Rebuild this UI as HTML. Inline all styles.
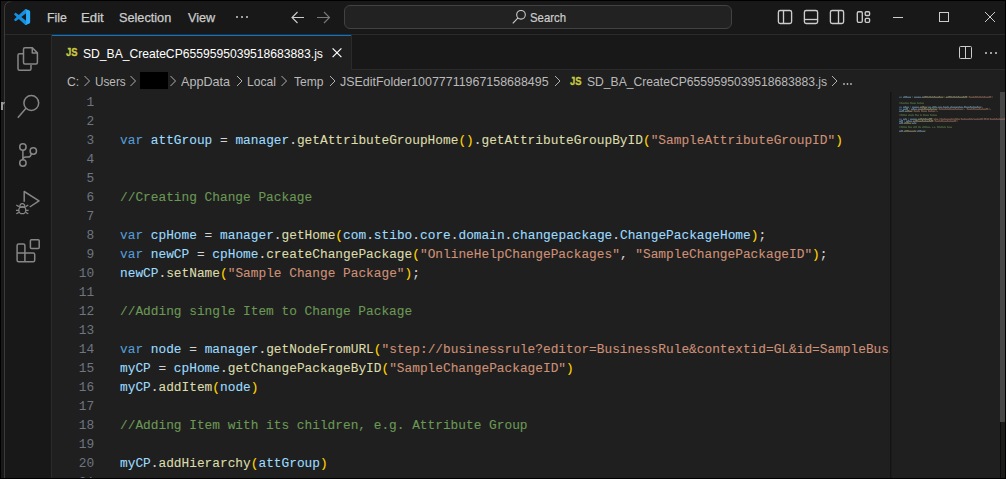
<!DOCTYPE html>
<html><head><meta charset="utf-8">
<style>
*{box-sizing:border-box;margin:0;padding:0}
html,body{width:1006px;height:479px;overflow:hidden;background:#000}
body{position:relative;font-family:"Liberation Sans",sans-serif}
.abs{position:absolute}
.t{position:absolute;white-space:nowrap;transform-origin:0 0}
#win{position:absolute;left:1px;top:1px;width:1004px;height:477px;background:#181818;overflow:hidden}
#frame{display:none}
.code{position:absolute;left:68px;font-family:"Liberation Mono",monospace;font-size:12.82px;white-space:pre;color:#d4d4d4;line-height:19px;-webkit-text-stroke:0.1px currentColor}
.ln{position:absolute;left:0;width:42.2px;text-align:right;font-family:"Liberation Mono",monospace;font-size:12.83px;color:#6e7681;line-height:19px}
.k{color:#569cd6}.v{color:#9cdcfe}.f{color:#dcdcaa}.s{color:#ce9178}.c{color:#6a9955}.b{color:#ffd700}
svg{overflow:visible}
</style></head><body>
<div class="abs" style="left:0;top:0;width:1006px;height:479px;background:#000"></div>
<div id="win">
  <div class="abs" style="left:0;top:0;width:1004px;height:33px;background:#181818"></div>
  <div class="abs" style="left:4px;top:33px;width:1000px;height:1px;background:#2b2b2b"></div>
  <div class="abs" style="left:343px;top:4px;width:388px;height:24px;background:#222222;border:1px solid #424242;border-radius:6px"></div>
  <div class="abs" style="left:50px;top:34px;width:1px;height:443px;background:#2b2b2b"></div>
  <div class="abs" style="left:51px;top:34px;width:953px;height:443px;background:#1f1f1f">
    <div class="abs" style="left:0;top:0;width:953px;height:35px;background:#181818;border-bottom:1px solid #2b2b2b"></div>
    <div class="abs" style="left:0;top:0;width:299px;height:35px;background:#1f1f1f;border-top:1px solid #0078d4"></div>
    <div class="abs" style="left:299px;top:0;width:1px;height:35px;background:#2b2b2b"></div>
    <div class="abs" style="left:0;top:57px;width:840px;height:386px;overflow:hidden">
<div class="ln" style="top:1.00px">1</div>
<div class="ln" style="top:20.00px">2</div>
<div class="ln" style="top:39.00px">3</div>
<div class="code" style="top:39.00px"><span class="k">var</span> <span class="v">attGroup</span> = <span class="v">manager</span>.<span class="f">getAttributeGroupHome</span><span class="b">()</span>.<span class="f">getAttributeGroupByID</span><span class="b">(</span><span class="s">"SampleAttributeGroupID"</span><span class="b">)</span></div>
<div class="ln" style="top:58.00px">4</div>
<div class="ln" style="top:77.00px">5</div>
<div class="ln" style="top:96.00px">6</div>
<div class="code" style="top:96.00px"><span class="c">//Creating Change Package</span></div>
<div class="ln" style="top:115.00px">7</div>
<div class="ln" style="top:134.00px">8</div>
<div class="code" style="top:134.00px"><span class="k">var</span> <span class="v">cpHome</span> = <span class="v">manager</span>.<span class="f">getHome</span><span class="b">(</span><span class="v">com</span>.<span class="v">stibo</span>.<span class="v">core</span>.<span class="v">domain</span>.<span class="v">changepackage</span>.<span class="v">ChangePackageHome</span><span class="b">)</span>;</div>
<div class="ln" style="top:153.00px">9</div>
<div class="code" style="top:153.00px"><span class="k">var</span> <span class="v">newCP</span> = <span class="v">cpHome</span>.<span class="f">createChangePackage</span><span class="b">(</span><span class="s">"OnlineHelpChangePackages"</span>, <span class="s">"SampleChangePackageID"</span><span class="b">)</span>;</div>
<div class="ln" style="top:172.00px">10</div>
<div class="code" style="top:172.00px"><span class="v">newCP</span>.<span class="f">setName</span><span class="b">(</span><span class="s">"Sample Change Package"</span><span class="b">)</span>;</div>
<div class="ln" style="top:191.00px">11</div>
<div class="ln" style="top:210.00px">12</div>
<div class="code" style="top:210.00px"><span class="c">//Adding single Item to Change Package</span></div>
<div class="ln" style="top:229.00px">13</div>
<div class="ln" style="top:248.00px">14</div>
<div class="code" style="top:248.00px"><span class="k">var</span> <span class="v">node</span> = <span class="v">manager</span>.<span class="f">getNodeFromURL</span><span class="b">(</span><span class="s">"step://businessrule?editor=BusinessRule&amp;contextid=GL&amp;id=SampleBusinessRule"</span><span class="b">)</span></div>
<div class="ln" style="top:267.00px">15</div>
<div class="code" style="top:267.00px"><span class="v">myCP</span> = <span class="v">cpHome</span>.<span class="f">getChangePackageByID</span><span class="b">(</span><span class="s">"SampleChangePackageID"</span><span class="b">)</span></div>
<div class="ln" style="top:286.00px">16</div>
<div class="code" style="top:286.00px"><span class="v">myCP</span>.<span class="f">addItem</span><span class="b">(</span><span class="v">node</span><span class="b">)</span></div>
<div class="ln" style="top:305.00px">17</div>
<div class="ln" style="top:324.00px">18</div>
<div class="code" style="top:324.00px"><span class="c">//Adding Item with its children, e.g. Attribute Group</span></div>
<div class="ln" style="top:343.00px">19</div>
<div class="ln" style="top:362.00px">20</div>
<div class="code" style="top:362.00px"><span class="v">myCP</span>.<span class="f">addHierarchy</span><span class="b">(</span><span class="v">attGroup</span><span class="b">)</span></div>
<div class="ln" style="top:381.00px">21</div>
    </div>
  </div>
  <div id="frame"></div>
</div>
<!-- page-coordinate overlays -->
<svg class="abs" style="left:0;top:0" width="1006" height="479">
  <!-- vscode logo -->
  <g transform="translate(14.1,9) scale(0.16)">
  <path d="M96.46 10.8 L75.86 .87 C73.48 -.28 70.63 .2 68.76 2.07 L29.35 38.04 12.18 25.01 C10.58 23.8 8.35 23.9 6.87 25.25 L1.37 30.25 C-.45 31.9 -.45 34.76 1.36 36.41 L16.25 50 1.36 63.59 C-.45 65.24 -.45 68.1 1.37 69.75 L6.87 74.75 C8.35 76.1 10.58 76.2 12.18 74.99 L29.35 61.96 68.76 97.93 C70.63 99.8 73.48 100.28 75.86 99.13 L96.46 89.2 C98.62 88.16 100 85.98 100 83.58 V16.42 C100 14.02 98.62 11.84 96.46 10.8 Z M75.02 72.7 L45.11 50 75.02 27.3 V72.7 Z" fill="#168ee0"/>
  <path d="M75.02 2 L96.46 10.8 C98.62 11.84 100 14.02 100 16.42 V83.58 C100 85.98 98.62 88.16 96.46 89.2 L75.86 99.13 C73.5 100.2 71 99.9 69 98 L75.02 92 Z" fill="#2aa9f5"/>
  </g>
  <!-- nav arrows -->
  <path d="M304 17.5 H291.5 M297.5 12 L292 17.5 L297.5 23" stroke="#cccccc" stroke-width="1.1" fill="none"/>
  <path d="M317 17.5 H329.5 M324 12 L329.5 17.5 L324 23" stroke="#7a7a7a" stroke-width="1.1" fill="none"/>
  <!-- search magnifier -->
  <circle cx="521" cy="14.8" r="4.3" stroke="#cccccc" stroke-width="1.1" fill="none"/>
  <path d="M518 17.9 L512.8 23.4" stroke="#cccccc" stroke-width="1.1"/>
  <!-- layout icons -->
  <g stroke="#cccccc" stroke-width="1.35" fill="none">
    <rect x="778.4" y="10.5" width="13.2" height="13" rx="1.8"/><path d="M783.5 11 V23"/>
    <rect x="804.4" y="10.5" width="13.2" height="13" rx="1.8"/><path d="M805 19.5 H817"/>
    <rect x="830.4" y="10.5" width="13.2" height="13" rx="1.8"/><path d="M838.5 11 V23"/>
    <rect x="857.3" y="11.7" width="5" height="10.6" rx="1.2"/>
    <rect x="865.2" y="11.7" width="4.4" height="3.8" rx="1.1"/>
    <rect x="865.2" y="18.4" width="4.4" height="3.9" rx="1.1"/>
  </g>
  <!-- window controls -->
  <path d="M893 17.5 H903" stroke="#cccccc" stroke-width="1"/>
  <rect x="939.5" y="12.5" width="9" height="9" stroke="#cccccc" stroke-width="1" fill="none"/>
  <path d="M985 12 L995 22 M995 12 L985 22" stroke="#cccccc" stroke-width="1"/>
  <!-- menu dots -->
  <circle cx="237" cy="17" r="1" fill="#cccccc"/><circle cx="242" cy="17" r="1" fill="#cccccc"/><circle cx="247" cy="17" r="1" fill="#cccccc"/>
  <!-- tab close -->
  <path d="M332.6 48.4 L341.4 57.2 M341.4 48.4 L332.6 57.2" stroke="#ffffff" stroke-width="1.2"/>
  <!-- split editor + more -->
  <g stroke="#cccccc" stroke-width="1" fill="none"><rect x="959.5" y="46.5" width="12" height="12" rx="1"/><path d="M965.5 47 V58"/></g>
  <circle cx="986" cy="53" r="1" fill="#cccccc"/><circle cx="991" cy="53" r="1" fill="#cccccc"/><circle cx="996" cy="53" r="1" fill="#cccccc"/>
  <!-- breadcrumb chevrons -->
  <g stroke="#b0b0b0" stroke-width="1" fill="none">
    <path d="M84.5 76 L89.5 81 L84.5 86"/>
    <path d="M130.5 76 L135.5 81 L130.5 86"/>
    <path d="M170.5 76 L175.5 81 L170.5 86"/>
    <path d="M237 76 L242 81 L237 86"/>
    <path d="M281.5 76 L286.5 81 L281.5 86"/>
    <path d="M330 76 L335 81 L330 86"/>
    <path d="M555 76 L560 81 L555 86"/>
    <path d="M832 76 L837 81 L832 86"/>
  </g>
  <rect x="140" y="72" width="28" height="17" fill="#000"/>
  <circle cx="844" cy="84" r="0.9" fill="#bababa"/><circle cx="847.5" cy="84" r="0.9" fill="#bababa"/><circle cx="851" cy="84" r="0.9" fill="#bababa"/>
  <!-- activity bar icons -->
  <g stroke="#868686" stroke-width="1.5" fill="none" stroke-linejoin="round">
    <path d="M23 53.8 H19.5 Q18 53.8 18 55.3 V68.8 Q18 70.3 19.5 70.3 H29.5 Q31 70.3 31 68.8 V65"/>
    <path d="M25 47.8 H32.3 L37.4 52.9 V62.5 Q37.4 64 35.9 64 H25 Q23.5 64 23.5 62.5 V49.3 Q23.5 47.8 25 47.8 Z"/>
    <path d="M32.3 47.8 V52.9 H37.4"/>
    <circle cx="31.3" cy="103" r="7.4"/>
    <path d="M26 108.3 L17.8 117.8"/>
    <circle cx="22.9" cy="147" r="3.2"/><circle cx="33.3" cy="151" r="3.2"/><circle cx="22.9" cy="163" r="3.2"/>
    <path d="M22.9 150.2 V159.8"/>
    <path d="M31.4 154 Q30.6 157.1 28 157.1 H25.8 Q22.9 157.1 22.9 159.8"/>
    <path d="M24.2 201.8 V191.5 L39 200.8 L29.7 207"/>
    <path d="M18.6 244 H23.4 Q24.9 244 24.9 245.5 V253 H33.2 Q34.7 253 34.7 254.5 V260.3 Q34.7 261.8 33.2 261.8 H18.6 Q17.1 261.8 17.1 260.3 V245.5 Q17.1 244 18.6 244 Z M17.1 253 H24.9 V261.8"/>
    <rect x="30.4" y="239.8" width="8.8" height="8.8" rx="1"/>
  </g>
  <g stroke="#868686" stroke-width="1.3" fill="none">
    <path d="M19.8 207.2 Q19.8 203.7 22.3 203.7 Q24.8 203.7 24.8 207.2"/>
    <ellipse cx="22.3" cy="210.2" rx="3.5" ry="3.5"/>
    <path d="M19 207.2 H25.6"/>
    <path d="M16.3 205 L18.9 206.6 M28.3 205 L25.7 206.6 M16 210.3 H18.8 M28.6 210.3 H25.8 M16.3 213.8 L18.9 212.4 M28.3 213.8 L25.7 212.4"/>
  </g>
  <!-- minimap shadow + scrollbar -->
  <rect x="890" y="92" width="1" height="386" fill="#131313"/><rect x="891" y="92" width="1" height="386" fill="#1a1a1a"/>
  <rect x="1000" y="92" width="5" height="330" fill="#464646"/>
  <rect x="1001" y="422" width="4" height="56" fill="#1c1b1a"/><rect x="1000" y="422" width="1" height="56" fill="#0a0b0e"/>
  <defs><linearGradient id="fg" x1="4" y1="0" x2="12" y2="0" gradientUnits="userSpaceOnUse"><stop offset="0" stop-color="#3a3a3a"/><stop offset="0.6" stop-color="#3a3a3a"/><stop offset="1" stop-color="#3a3a3a" stop-opacity="0"/></linearGradient></defs>
  <path d="M4.5 478 V8 Q4.5 1.5 12 1.5" stroke="url(#fg)" stroke-width="1" fill="none"/>
  <rect x="4" y="12" width="1" height="466" fill="#3a3a3a"/>
  <!-- left "r" -->
  <rect x="1" y="102" width="2" height="8" fill="#9a9a9a"/><path d="M2.6 104.5 Q3 102.6 5 102.6" stroke="#9a9a9a" stroke-width="1.4" fill="none"/>
</svg>
<svg class="abs" style="left:899px;top:92px" width="100" height="60"><rect x="0" y="4" width="3" height="1" fill="#569cd6" fill-opacity="0.17"/><rect x="4" y="4" width="1" height="1" fill="#9cdcfe" fill-opacity="0.17"/><rect x="5" y="4" width="2" height="1" fill="#9cdcfe" fill-opacity="0.33"/><rect x="7" y="4" width="1" height="1" fill="#9cdcfe" fill-opacity="0.41"/><rect x="8" y="4" width="3" height="1" fill="#9cdcfe" fill-opacity="0.17"/><rect x="11" y="4" width="1" height="1" fill="#9cdcfe" fill-opacity="0.19"/><rect x="13" y="4" width="1" height="1" fill="#d4d4d4" fill-opacity="0.14"/><rect x="15" y="4" width="4" height="1" fill="#9cdcfe" fill-opacity="0.17"/><rect x="19" y="4" width="1" height="1" fill="#9cdcfe" fill-opacity="0.19"/><rect x="20" y="4" width="2" height="1" fill="#9cdcfe" fill-opacity="0.17"/><rect x="23" y="4" width="1" height="1" fill="#dcdcaa" fill-opacity="0.19"/><rect x="24" y="4" width="1" height="1" fill="#dcdcaa" fill-opacity="0.17"/><rect x="25" y="4" width="1" height="1" fill="#dcdcaa" fill-opacity="0.33"/><rect x="26" y="4" width="1" height="1" fill="#dcdcaa" fill-opacity="0.41"/><rect x="27" y="4" width="2" height="1" fill="#dcdcaa" fill-opacity="0.33"/><rect x="29" y="4" width="1" height="1" fill="#dcdcaa" fill-opacity="0.17"/><rect x="30" y="4" width="2" height="1" fill="#dcdcaa" fill-opacity="0.33"/><rect x="32" y="4" width="1" height="1" fill="#dcdcaa" fill-opacity="0.17"/><rect x="33" y="4" width="1" height="1" fill="#dcdcaa" fill-opacity="0.33"/><rect x="34" y="4" width="1" height="1" fill="#dcdcaa" fill-opacity="0.17"/><rect x="35" y="4" width="1" height="1" fill="#dcdcaa" fill-opacity="0.41"/><rect x="36" y="4" width="3" height="1" fill="#dcdcaa" fill-opacity="0.17"/><rect x="39" y="4" width="1" height="1" fill="#dcdcaa" fill-opacity="0.19"/><rect x="40" y="4" width="1" height="1" fill="#dcdcaa" fill-opacity="0.41"/><rect x="41" y="4" width="3" height="1" fill="#dcdcaa" fill-opacity="0.17"/><rect x="44" y="4" width="2" height="1" fill="#ffd700" fill-opacity="0.14"/><rect x="47" y="4" width="1" height="1" fill="#dcdcaa" fill-opacity="0.19"/><rect x="48" y="4" width="1" height="1" fill="#dcdcaa" fill-opacity="0.17"/><rect x="49" y="4" width="1" height="1" fill="#dcdcaa" fill-opacity="0.33"/><rect x="50" y="4" width="1" height="1" fill="#dcdcaa" fill-opacity="0.41"/><rect x="51" y="4" width="2" height="1" fill="#dcdcaa" fill-opacity="0.33"/><rect x="53" y="4" width="1" height="1" fill="#dcdcaa" fill-opacity="0.17"/><rect x="54" y="4" width="2" height="1" fill="#dcdcaa" fill-opacity="0.33"/><rect x="56" y="4" width="1" height="1" fill="#dcdcaa" fill-opacity="0.17"/><rect x="57" y="4" width="1" height="1" fill="#dcdcaa" fill-opacity="0.33"/><rect x="58" y="4" width="1" height="1" fill="#dcdcaa" fill-opacity="0.17"/><rect x="59" y="4" width="1" height="1" fill="#dcdcaa" fill-opacity="0.41"/><rect x="60" y="4" width="3" height="1" fill="#dcdcaa" fill-opacity="0.17"/><rect x="63" y="4" width="1" height="1" fill="#dcdcaa" fill-opacity="0.19"/><rect x="64" y="4" width="1" height="1" fill="#dcdcaa" fill-opacity="0.41"/><rect x="65" y="4" width="1" height="1" fill="#dcdcaa" fill-opacity="0.19"/><rect x="66" y="4" width="2" height="1" fill="#dcdcaa" fill-opacity="0.41"/><rect x="68" y="4" width="1" height="1" fill="#ffd700" fill-opacity="0.14"/><rect x="69" y="4" width="1" height="1" fill="#ce9178" fill-opacity="0.14"/><rect x="70" y="4" width="1" height="1" fill="#ce9178" fill-opacity="0.41"/><rect x="71" y="4" width="2" height="1" fill="#ce9178" fill-opacity="0.17"/><rect x="73" y="4" width="1" height="1" fill="#ce9178" fill-opacity="0.19"/><rect x="74" y="4" width="1" height="1" fill="#ce9178" fill-opacity="0.33"/><rect x="75" y="4" width="1" height="1" fill="#ce9178" fill-opacity="0.17"/><rect x="76" y="4" width="1" height="1" fill="#ce9178" fill-opacity="0.41"/><rect x="77" y="4" width="2" height="1" fill="#ce9178" fill-opacity="0.33"/><rect x="79" y="4" width="1" height="1" fill="#ce9178" fill-opacity="0.17"/><rect x="80" y="4" width="2" height="1" fill="#ce9178" fill-opacity="0.33"/><rect x="82" y="4" width="1" height="1" fill="#ce9178" fill-opacity="0.17"/><rect x="83" y="4" width="1" height="1" fill="#ce9178" fill-opacity="0.33"/><rect x="84" y="4" width="1" height="1" fill="#ce9178" fill-opacity="0.17"/><rect x="85" y="4" width="1" height="1" fill="#ce9178" fill-opacity="0.41"/><rect x="86" y="4" width="3" height="1" fill="#ce9178" fill-opacity="0.17"/><rect x="89" y="4" width="1" height="1" fill="#ce9178" fill-opacity="0.19"/><rect x="90" y="4" width="2" height="1" fill="#ce9178" fill-opacity="0.41"/><rect x="92" y="4" width="1" height="1" fill="#ce9178" fill-opacity="0.14"/><rect x="93" y="4" width="1" height="1" fill="#ffd700" fill-opacity="0.14"/><rect x="0" y="5" width="3" height="1" fill="#569cd6" fill-opacity="0.39"/><rect x="4" y="5" width="1" height="1" fill="#9cdcfe" fill-opacity="0.39"/><rect x="5" y="5" width="3" height="1" fill="#9cdcfe" fill-opacity="0.36"/><rect x="8" y="5" width="3" height="1" fill="#9cdcfe" fill-opacity="0.39"/><rect x="11" y="5" width="1" height="1" fill="#9cdcfe" fill-opacity="0.41"/><rect x="13" y="5" width="1" height="1" fill="#d4d4d4" fill-opacity="0.14"/><rect x="15" y="5" width="4" height="1" fill="#9cdcfe" fill-opacity="0.39"/><rect x="19" y="5" width="1" height="1" fill="#9cdcfe" fill-opacity="0.41"/><rect x="20" y="5" width="2" height="1" fill="#9cdcfe" fill-opacity="0.39"/><rect x="22" y="5" width="1" height="1" fill="#d4d4d4" fill-opacity="0.19"/><rect x="23" y="5" width="1" height="1" fill="#dcdcaa" fill-opacity="0.41"/><rect x="24" y="5" width="1" height="1" fill="#dcdcaa" fill-opacity="0.39"/><rect x="25" y="5" width="4" height="1" fill="#dcdcaa" fill-opacity="0.36"/><rect x="29" y="5" width="1" height="1" fill="#dcdcaa" fill-opacity="0.39"/><rect x="30" y="5" width="2" height="1" fill="#dcdcaa" fill-opacity="0.36"/><rect x="32" y="5" width="1" height="1" fill="#dcdcaa" fill-opacity="0.39"/><rect x="33" y="5" width="1" height="1" fill="#dcdcaa" fill-opacity="0.36"/><rect x="34" y="5" width="1" height="1" fill="#dcdcaa" fill-opacity="0.39"/><rect x="35" y="5" width="1" height="1" fill="#dcdcaa" fill-opacity="0.36"/><rect x="36" y="5" width="3" height="1" fill="#dcdcaa" fill-opacity="0.39"/><rect x="39" y="5" width="1" height="1" fill="#dcdcaa" fill-opacity="0.41"/><rect x="40" y="5" width="1" height="1" fill="#dcdcaa" fill-opacity="0.36"/><rect x="41" y="5" width="3" height="1" fill="#dcdcaa" fill-opacity="0.39"/><rect x="44" y="5" width="2" height="1" fill="#ffd700" fill-opacity="0.14"/><rect x="46" y="5" width="1" height="1" fill="#d4d4d4" fill-opacity="0.19"/><rect x="47" y="5" width="1" height="1" fill="#dcdcaa" fill-opacity="0.41"/><rect x="48" y="5" width="1" height="1" fill="#dcdcaa" fill-opacity="0.39"/><rect x="49" y="5" width="4" height="1" fill="#dcdcaa" fill-opacity="0.36"/><rect x="53" y="5" width="1" height="1" fill="#dcdcaa" fill-opacity="0.39"/><rect x="54" y="5" width="2" height="1" fill="#dcdcaa" fill-opacity="0.36"/><rect x="56" y="5" width="1" height="1" fill="#dcdcaa" fill-opacity="0.39"/><rect x="57" y="5" width="1" height="1" fill="#dcdcaa" fill-opacity="0.36"/><rect x="58" y="5" width="1" height="1" fill="#dcdcaa" fill-opacity="0.39"/><rect x="59" y="5" width="1" height="1" fill="#dcdcaa" fill-opacity="0.36"/><rect x="60" y="5" width="3" height="1" fill="#dcdcaa" fill-opacity="0.39"/><rect x="63" y="5" width="1" height="1" fill="#dcdcaa" fill-opacity="0.41"/><rect x="64" y="5" width="1" height="1" fill="#dcdcaa" fill-opacity="0.36"/><rect x="65" y="5" width="1" height="1" fill="#dcdcaa" fill-opacity="0.41"/><rect x="66" y="5" width="2" height="1" fill="#dcdcaa" fill-opacity="0.36"/><rect x="68" y="5" width="1" height="1" fill="#ffd700" fill-opacity="0.14"/><rect x="69" y="5" width="1" height="1" fill="#ce9178" fill-opacity="0.14"/><rect x="70" y="5" width="1" height="1" fill="#ce9178" fill-opacity="0.36"/><rect x="71" y="5" width="2" height="1" fill="#ce9178" fill-opacity="0.39"/><rect x="73" y="5" width="1" height="1" fill="#ce9178" fill-opacity="0.41"/><rect x="74" y="5" width="1" height="1" fill="#ce9178" fill-opacity="0.36"/><rect x="75" y="5" width="1" height="1" fill="#ce9178" fill-opacity="0.39"/><rect x="76" y="5" width="3" height="1" fill="#ce9178" fill-opacity="0.36"/><rect x="79" y="5" width="1" height="1" fill="#ce9178" fill-opacity="0.39"/><rect x="80" y="5" width="2" height="1" fill="#ce9178" fill-opacity="0.36"/><rect x="82" y="5" width="1" height="1" fill="#ce9178" fill-opacity="0.39"/><rect x="83" y="5" width="1" height="1" fill="#ce9178" fill-opacity="0.36"/><rect x="84" y="5" width="1" height="1" fill="#ce9178" fill-opacity="0.39"/><rect x="85" y="5" width="1" height="1" fill="#ce9178" fill-opacity="0.36"/><rect x="86" y="5" width="3" height="1" fill="#ce9178" fill-opacity="0.39"/><rect x="89" y="5" width="1" height="1" fill="#ce9178" fill-opacity="0.41"/><rect x="90" y="5" width="2" height="1" fill="#ce9178" fill-opacity="0.36"/><rect x="92" y="5" width="1" height="1" fill="#ce9178" fill-opacity="0.14"/><rect x="93" y="5" width="1" height="1" fill="#ffd700" fill-opacity="0.14"/><rect x="0" y="10" width="2" height="1" fill="#6a9955" fill-opacity="0.25"/><rect x="2" y="10" width="1" height="1" fill="#6a9955" fill-opacity="0.41"/><rect x="3" y="10" width="3" height="1" fill="#6a9955" fill-opacity="0.17"/><rect x="6" y="10" width="2" height="1" fill="#6a9955" fill-opacity="0.33"/><rect x="8" y="10" width="1" height="1" fill="#6a9955" fill-opacity="0.17"/><rect x="9" y="10" width="1" height="1" fill="#6a9955" fill-opacity="0.19"/><rect x="11" y="10" width="1" height="1" fill="#6a9955" fill-opacity="0.41"/><rect x="12" y="10" width="1" height="1" fill="#6a9955" fill-opacity="0.33"/><rect x="13" y="10" width="2" height="1" fill="#6a9955" fill-opacity="0.17"/><rect x="15" y="10" width="1" height="1" fill="#6a9955" fill-opacity="0.19"/><rect x="16" y="10" width="1" height="1" fill="#6a9955" fill-opacity="0.17"/><rect x="18" y="10" width="1" height="1" fill="#6a9955" fill-opacity="0.41"/><rect x="19" y="10" width="2" height="1" fill="#6a9955" fill-opacity="0.17"/><rect x="21" y="10" width="1" height="1" fill="#6a9955" fill-opacity="0.33"/><rect x="22" y="10" width="1" height="1" fill="#6a9955" fill-opacity="0.17"/><rect x="23" y="10" width="1" height="1" fill="#6a9955" fill-opacity="0.19"/><rect x="24" y="10" width="1" height="1" fill="#6a9955" fill-opacity="0.17"/><rect x="0" y="11" width="2" height="1" fill="#6a9955" fill-opacity="0.22"/><rect x="2" y="11" width="1" height="1" fill="#6a9955" fill-opacity="0.36"/><rect x="3" y="11" width="3" height="1" fill="#6a9955" fill-opacity="0.39"/><rect x="6" y="11" width="2" height="1" fill="#6a9955" fill-opacity="0.36"/><rect x="8" y="11" width="1" height="1" fill="#6a9955" fill-opacity="0.39"/><rect x="9" y="11" width="1" height="1" fill="#6a9955" fill-opacity="0.41"/><rect x="11" y="11" width="2" height="1" fill="#6a9955" fill-opacity="0.36"/><rect x="13" y="11" width="2" height="1" fill="#6a9955" fill-opacity="0.39"/><rect x="15" y="11" width="1" height="1" fill="#6a9955" fill-opacity="0.41"/><rect x="16" y="11" width="1" height="1" fill="#6a9955" fill-opacity="0.39"/><rect x="18" y="11" width="1" height="1" fill="#6a9955" fill-opacity="0.36"/><rect x="19" y="11" width="2" height="1" fill="#6a9955" fill-opacity="0.39"/><rect x="21" y="11" width="1" height="1" fill="#6a9955" fill-opacity="0.36"/><rect x="22" y="11" width="1" height="1" fill="#6a9955" fill-opacity="0.39"/><rect x="23" y="11" width="1" height="1" fill="#6a9955" fill-opacity="0.41"/><rect x="24" y="11" width="1" height="1" fill="#6a9955" fill-opacity="0.39"/><rect x="0" y="14" width="3" height="1" fill="#569cd6" fill-opacity="0.17"/><rect x="4" y="14" width="1" height="1" fill="#9cdcfe" fill-opacity="0.17"/><rect x="5" y="14" width="1" height="1" fill="#9cdcfe" fill-opacity="0.19"/><rect x="6" y="14" width="1" height="1" fill="#9cdcfe" fill-opacity="0.41"/><rect x="7" y="14" width="3" height="1" fill="#9cdcfe" fill-opacity="0.17"/><rect x="11" y="14" width="1" height="1" fill="#d4d4d4" fill-opacity="0.14"/><rect x="13" y="14" width="4" height="1" fill="#9cdcfe" fill-opacity="0.17"/><rect x="17" y="14" width="1" height="1" fill="#9cdcfe" fill-opacity="0.19"/><rect x="18" y="14" width="2" height="1" fill="#9cdcfe" fill-opacity="0.17"/><rect x="21" y="14" width="1" height="1" fill="#dcdcaa" fill-opacity="0.19"/><rect x="22" y="14" width="1" height="1" fill="#dcdcaa" fill-opacity="0.17"/><rect x="23" y="14" width="1" height="1" fill="#dcdcaa" fill-opacity="0.33"/><rect x="24" y="14" width="1" height="1" fill="#dcdcaa" fill-opacity="0.41"/><rect x="25" y="14" width="3" height="1" fill="#dcdcaa" fill-opacity="0.17"/><rect x="28" y="14" width="1" height="1" fill="#ffd700" fill-opacity="0.14"/><rect x="29" y="14" width="3" height="1" fill="#9cdcfe" fill-opacity="0.17"/><rect x="33" y="14" width="1" height="1" fill="#9cdcfe" fill-opacity="0.17"/><rect x="34" y="14" width="3" height="1" fill="#9cdcfe" fill-opacity="0.33"/><rect x="37" y="14" width="1" height="1" fill="#9cdcfe" fill-opacity="0.17"/><rect x="39" y="14" width="4" height="1" fill="#9cdcfe" fill-opacity="0.17"/><rect x="44" y="14" width="1" height="1" fill="#9cdcfe" fill-opacity="0.33"/><rect x="45" y="14" width="3" height="1" fill="#9cdcfe" fill-opacity="0.17"/><rect x="48" y="14" width="1" height="1" fill="#9cdcfe" fill-opacity="0.33"/><rect x="49" y="14" width="1" height="1" fill="#9cdcfe" fill-opacity="0.17"/><rect x="51" y="14" width="1" height="1" fill="#9cdcfe" fill-opacity="0.17"/><rect x="52" y="14" width="1" height="1" fill="#9cdcfe" fill-opacity="0.33"/><rect x="53" y="14" width="2" height="1" fill="#9cdcfe" fill-opacity="0.17"/><rect x="55" y="14" width="1" height="1" fill="#9cdcfe" fill-opacity="0.19"/><rect x="56" y="14" width="1" height="1" fill="#9cdcfe" fill-opacity="0.17"/><rect x="57" y="14" width="1" height="1" fill="#9cdcfe" fill-opacity="0.19"/><rect x="58" y="14" width="2" height="1" fill="#9cdcfe" fill-opacity="0.17"/><rect x="60" y="14" width="1" height="1" fill="#9cdcfe" fill-opacity="0.33"/><rect x="61" y="14" width="1" height="1" fill="#9cdcfe" fill-opacity="0.17"/><rect x="62" y="14" width="1" height="1" fill="#9cdcfe" fill-opacity="0.19"/><rect x="63" y="14" width="1" height="1" fill="#9cdcfe" fill-opacity="0.17"/><rect x="65" y="14" width="1" height="1" fill="#9cdcfe" fill-opacity="0.41"/><rect x="66" y="14" width="1" height="1" fill="#9cdcfe" fill-opacity="0.33"/><rect x="67" y="14" width="2" height="1" fill="#9cdcfe" fill-opacity="0.17"/><rect x="69" y="14" width="1" height="1" fill="#9cdcfe" fill-opacity="0.19"/><rect x="70" y="14" width="1" height="1" fill="#9cdcfe" fill-opacity="0.17"/><rect x="71" y="14" width="1" height="1" fill="#9cdcfe" fill-opacity="0.41"/><rect x="72" y="14" width="2" height="1" fill="#9cdcfe" fill-opacity="0.17"/><rect x="74" y="14" width="1" height="1" fill="#9cdcfe" fill-opacity="0.33"/><rect x="75" y="14" width="1" height="1" fill="#9cdcfe" fill-opacity="0.17"/><rect x="76" y="14" width="1" height="1" fill="#9cdcfe" fill-opacity="0.19"/><rect x="77" y="14" width="1" height="1" fill="#9cdcfe" fill-opacity="0.17"/><rect x="78" y="14" width="1" height="1" fill="#9cdcfe" fill-opacity="0.41"/><rect x="79" y="14" width="3" height="1" fill="#9cdcfe" fill-opacity="0.17"/><rect x="82" y="14" width="1" height="1" fill="#ffd700" fill-opacity="0.14"/><rect x="0" y="15" width="3" height="1" fill="#569cd6" fill-opacity="0.39"/><rect x="4" y="15" width="1" height="1" fill="#9cdcfe" fill-opacity="0.39"/><rect x="5" y="15" width="1" height="1" fill="#9cdcfe" fill-opacity="0.41"/><rect x="6" y="15" width="1" height="1" fill="#9cdcfe" fill-opacity="0.36"/><rect x="7" y="15" width="3" height="1" fill="#9cdcfe" fill-opacity="0.39"/><rect x="11" y="15" width="1" height="1" fill="#d4d4d4" fill-opacity="0.14"/><rect x="13" y="15" width="4" height="1" fill="#9cdcfe" fill-opacity="0.39"/><rect x="17" y="15" width="1" height="1" fill="#9cdcfe" fill-opacity="0.41"/><rect x="18" y="15" width="2" height="1" fill="#9cdcfe" fill-opacity="0.39"/><rect x="20" y="15" width="1" height="1" fill="#d4d4d4" fill-opacity="0.19"/><rect x="21" y="15" width="1" height="1" fill="#dcdcaa" fill-opacity="0.41"/><rect x="22" y="15" width="1" height="1" fill="#dcdcaa" fill-opacity="0.39"/><rect x="23" y="15" width="2" height="1" fill="#dcdcaa" fill-opacity="0.36"/><rect x="25" y="15" width="3" height="1" fill="#dcdcaa" fill-opacity="0.39"/><rect x="28" y="15" width="1" height="1" fill="#ffd700" fill-opacity="0.14"/><rect x="29" y="15" width="3" height="1" fill="#9cdcfe" fill-opacity="0.39"/><rect x="32" y="15" width="1" height="1" fill="#d4d4d4" fill-opacity="0.19"/><rect x="33" y="15" width="1" height="1" fill="#9cdcfe" fill-opacity="0.39"/><rect x="34" y="15" width="3" height="1" fill="#9cdcfe" fill-opacity="0.36"/><rect x="37" y="15" width="1" height="1" fill="#9cdcfe" fill-opacity="0.39"/><rect x="38" y="15" width="1" height="1" fill="#d4d4d4" fill-opacity="0.19"/><rect x="39" y="15" width="4" height="1" fill="#9cdcfe" fill-opacity="0.39"/><rect x="43" y="15" width="1" height="1" fill="#d4d4d4" fill-opacity="0.19"/><rect x="44" y="15" width="1" height="1" fill="#9cdcfe" fill-opacity="0.36"/><rect x="45" y="15" width="3" height="1" fill="#9cdcfe" fill-opacity="0.39"/><rect x="48" y="15" width="1" height="1" fill="#9cdcfe" fill-opacity="0.36"/><rect x="49" y="15" width="1" height="1" fill="#9cdcfe" fill-opacity="0.39"/><rect x="50" y="15" width="1" height="1" fill="#d4d4d4" fill-opacity="0.19"/><rect x="51" y="15" width="1" height="1" fill="#9cdcfe" fill-opacity="0.39"/><rect x="52" y="15" width="1" height="1" fill="#9cdcfe" fill-opacity="0.36"/><rect x="53" y="15" width="2" height="1" fill="#9cdcfe" fill-opacity="0.39"/><rect x="55" y="15" width="1" height="1" fill="#9cdcfe" fill-opacity="0.41"/><rect x="56" y="15" width="1" height="1" fill="#9cdcfe" fill-opacity="0.39"/><rect x="57" y="15" width="1" height="1" fill="#9cdcfe" fill-opacity="0.41"/><rect x="58" y="15" width="2" height="1" fill="#9cdcfe" fill-opacity="0.39"/><rect x="60" y="15" width="1" height="1" fill="#9cdcfe" fill-opacity="0.36"/><rect x="61" y="15" width="1" height="1" fill="#9cdcfe" fill-opacity="0.39"/><rect x="62" y="15" width="1" height="1" fill="#9cdcfe" fill-opacity="0.41"/><rect x="63" y="15" width="1" height="1" fill="#9cdcfe" fill-opacity="0.39"/><rect x="64" y="15" width="1" height="1" fill="#d4d4d4" fill-opacity="0.19"/><rect x="65" y="15" width="2" height="1" fill="#9cdcfe" fill-opacity="0.36"/><rect x="67" y="15" width="2" height="1" fill="#9cdcfe" fill-opacity="0.39"/><rect x="69" y="15" width="1" height="1" fill="#9cdcfe" fill-opacity="0.41"/><rect x="70" y="15" width="1" height="1" fill="#9cdcfe" fill-opacity="0.39"/><rect x="71" y="15" width="1" height="1" fill="#9cdcfe" fill-opacity="0.36"/><rect x="72" y="15" width="2" height="1" fill="#9cdcfe" fill-opacity="0.39"/><rect x="74" y="15" width="1" height="1" fill="#9cdcfe" fill-opacity="0.36"/><rect x="75" y="15" width="1" height="1" fill="#9cdcfe" fill-opacity="0.39"/><rect x="76" y="15" width="1" height="1" fill="#9cdcfe" fill-opacity="0.41"/><rect x="77" y="15" width="1" height="1" fill="#9cdcfe" fill-opacity="0.39"/><rect x="78" y="15" width="1" height="1" fill="#9cdcfe" fill-opacity="0.36"/><rect x="79" y="15" width="3" height="1" fill="#9cdcfe" fill-opacity="0.39"/><rect x="82" y="15" width="1" height="1" fill="#ffd700" fill-opacity="0.14"/><rect x="83" y="15" width="1" height="1" fill="#d4d4d4" fill-opacity="0.19"/><rect x="0" y="16" width="3" height="1" fill="#569cd6" fill-opacity="0.17"/><rect x="4" y="16" width="3" height="1" fill="#9cdcfe" fill-opacity="0.17"/><rect x="7" y="16" width="2" height="1" fill="#9cdcfe" fill-opacity="0.41"/><rect x="10" y="16" width="1" height="1" fill="#d4d4d4" fill-opacity="0.14"/><rect x="12" y="16" width="1" height="1" fill="#9cdcfe" fill-opacity="0.17"/><rect x="13" y="16" width="1" height="1" fill="#9cdcfe" fill-opacity="0.19"/><rect x="14" y="16" width="1" height="1" fill="#9cdcfe" fill-opacity="0.41"/><rect x="15" y="16" width="3" height="1" fill="#9cdcfe" fill-opacity="0.17"/><rect x="19" y="16" width="4" height="1" fill="#dcdcaa" fill-opacity="0.17"/><rect x="23" y="16" width="1" height="1" fill="#dcdcaa" fill-opacity="0.33"/><rect x="24" y="16" width="1" height="1" fill="#dcdcaa" fill-opacity="0.17"/><rect x="25" y="16" width="1" height="1" fill="#dcdcaa" fill-opacity="0.41"/><rect x="26" y="16" width="1" height="1" fill="#dcdcaa" fill-opacity="0.33"/><rect x="27" y="16" width="2" height="1" fill="#dcdcaa" fill-opacity="0.17"/><rect x="29" y="16" width="1" height="1" fill="#dcdcaa" fill-opacity="0.19"/><rect x="30" y="16" width="1" height="1" fill="#dcdcaa" fill-opacity="0.17"/><rect x="31" y="16" width="1" height="1" fill="#dcdcaa" fill-opacity="0.41"/><rect x="32" y="16" width="2" height="1" fill="#dcdcaa" fill-opacity="0.17"/><rect x="34" y="16" width="1" height="1" fill="#dcdcaa" fill-opacity="0.33"/><rect x="35" y="16" width="1" height="1" fill="#dcdcaa" fill-opacity="0.17"/><rect x="36" y="16" width="1" height="1" fill="#dcdcaa" fill-opacity="0.19"/><rect x="37" y="16" width="1" height="1" fill="#dcdcaa" fill-opacity="0.17"/><rect x="38" y="16" width="1" height="1" fill="#ffd700" fill-opacity="0.14"/><rect x="39" y="16" width="1" height="1" fill="#ce9178" fill-opacity="0.14"/><rect x="40" y="16" width="1" height="1" fill="#ce9178" fill-opacity="0.41"/><rect x="41" y="16" width="1" height="1" fill="#ce9178" fill-opacity="0.17"/><rect x="42" y="16" width="2" height="1" fill="#ce9178" fill-opacity="0.33"/><rect x="44" y="16" width="2" height="1" fill="#ce9178" fill-opacity="0.17"/><rect x="46" y="16" width="1" height="1" fill="#ce9178" fill-opacity="0.41"/><rect x="47" y="16" width="1" height="1" fill="#ce9178" fill-opacity="0.17"/><rect x="48" y="16" width="1" height="1" fill="#ce9178" fill-opacity="0.33"/><rect x="49" y="16" width="1" height="1" fill="#ce9178" fill-opacity="0.19"/><rect x="50" y="16" width="1" height="1" fill="#ce9178" fill-opacity="0.41"/><rect x="51" y="16" width="1" height="1" fill="#ce9178" fill-opacity="0.33"/><rect x="52" y="16" width="2" height="1" fill="#ce9178" fill-opacity="0.17"/><rect x="54" y="16" width="1" height="1" fill="#ce9178" fill-opacity="0.19"/><rect x="55" y="16" width="1" height="1" fill="#ce9178" fill-opacity="0.17"/><rect x="56" y="16" width="1" height="1" fill="#ce9178" fill-opacity="0.41"/><rect x="57" y="16" width="2" height="1" fill="#ce9178" fill-opacity="0.17"/><rect x="59" y="16" width="1" height="1" fill="#ce9178" fill-opacity="0.33"/><rect x="60" y="16" width="1" height="1" fill="#ce9178" fill-opacity="0.17"/><rect x="61" y="16" width="1" height="1" fill="#ce9178" fill-opacity="0.19"/><rect x="62" y="16" width="2" height="1" fill="#ce9178" fill-opacity="0.17"/><rect x="64" y="16" width="1" height="1" fill="#ce9178" fill-opacity="0.14"/><rect x="67" y="16" width="1" height="1" fill="#ce9178" fill-opacity="0.14"/><rect x="68" y="16" width="1" height="1" fill="#ce9178" fill-opacity="0.41"/><rect x="69" y="16" width="2" height="1" fill="#ce9178" fill-opacity="0.17"/><rect x="71" y="16" width="1" height="1" fill="#ce9178" fill-opacity="0.19"/><rect x="72" y="16" width="1" height="1" fill="#ce9178" fill-opacity="0.33"/><rect x="73" y="16" width="1" height="1" fill="#ce9178" fill-opacity="0.17"/><rect x="74" y="16" width="1" height="1" fill="#ce9178" fill-opacity="0.41"/><rect x="75" y="16" width="1" height="1" fill="#ce9178" fill-opacity="0.33"/><rect x="76" y="16" width="2" height="1" fill="#ce9178" fill-opacity="0.17"/><rect x="78" y="16" width="1" height="1" fill="#ce9178" fill-opacity="0.19"/><rect x="79" y="16" width="1" height="1" fill="#ce9178" fill-opacity="0.17"/><rect x="80" y="16" width="1" height="1" fill="#ce9178" fill-opacity="0.41"/><rect x="81" y="16" width="2" height="1" fill="#ce9178" fill-opacity="0.17"/><rect x="83" y="16" width="1" height="1" fill="#ce9178" fill-opacity="0.33"/><rect x="84" y="16" width="1" height="1" fill="#ce9178" fill-opacity="0.17"/><rect x="85" y="16" width="1" height="1" fill="#ce9178" fill-opacity="0.19"/><rect x="86" y="16" width="1" height="1" fill="#ce9178" fill-opacity="0.17"/><rect x="87" y="16" width="2" height="1" fill="#ce9178" fill-opacity="0.41"/><rect x="89" y="16" width="1" height="1" fill="#ce9178" fill-opacity="0.14"/><rect x="90" y="16" width="1" height="1" fill="#ffd700" fill-opacity="0.14"/><rect x="0" y="17" width="3" height="1" fill="#569cd6" fill-opacity="0.39"/><rect x="4" y="17" width="3" height="1" fill="#9cdcfe" fill-opacity="0.39"/><rect x="7" y="17" width="2" height="1" fill="#9cdcfe" fill-opacity="0.36"/><rect x="10" y="17" width="1" height="1" fill="#d4d4d4" fill-opacity="0.14"/><rect x="12" y="17" width="1" height="1" fill="#9cdcfe" fill-opacity="0.39"/><rect x="13" y="17" width="1" height="1" fill="#9cdcfe" fill-opacity="0.41"/><rect x="14" y="17" width="1" height="1" fill="#9cdcfe" fill-opacity="0.36"/><rect x="15" y="17" width="3" height="1" fill="#9cdcfe" fill-opacity="0.39"/><rect x="18" y="17" width="1" height="1" fill="#d4d4d4" fill-opacity="0.19"/><rect x="19" y="17" width="4" height="1" fill="#dcdcaa" fill-opacity="0.39"/><rect x="23" y="17" width="1" height="1" fill="#dcdcaa" fill-opacity="0.36"/><rect x="24" y="17" width="1" height="1" fill="#dcdcaa" fill-opacity="0.39"/><rect x="25" y="17" width="2" height="1" fill="#dcdcaa" fill-opacity="0.36"/><rect x="27" y="17" width="2" height="1" fill="#dcdcaa" fill-opacity="0.39"/><rect x="29" y="17" width="1" height="1" fill="#dcdcaa" fill-opacity="0.41"/><rect x="30" y="17" width="1" height="1" fill="#dcdcaa" fill-opacity="0.39"/><rect x="31" y="17" width="1" height="1" fill="#dcdcaa" fill-opacity="0.36"/><rect x="32" y="17" width="2" height="1" fill="#dcdcaa" fill-opacity="0.39"/><rect x="34" y="17" width="1" height="1" fill="#dcdcaa" fill-opacity="0.36"/><rect x="35" y="17" width="1" height="1" fill="#dcdcaa" fill-opacity="0.39"/><rect x="36" y="17" width="1" height="1" fill="#dcdcaa" fill-opacity="0.41"/><rect x="37" y="17" width="1" height="1" fill="#dcdcaa" fill-opacity="0.39"/><rect x="38" y="17" width="1" height="1" fill="#ffd700" fill-opacity="0.14"/><rect x="39" y="17" width="1" height="1" fill="#ce9178" fill-opacity="0.14"/><rect x="40" y="17" width="1" height="1" fill="#ce9178" fill-opacity="0.36"/><rect x="41" y="17" width="1" height="1" fill="#ce9178" fill-opacity="0.39"/><rect x="42" y="17" width="2" height="1" fill="#ce9178" fill-opacity="0.36"/><rect x="44" y="17" width="2" height="1" fill="#ce9178" fill-opacity="0.39"/><rect x="46" y="17" width="1" height="1" fill="#ce9178" fill-opacity="0.36"/><rect x="47" y="17" width="1" height="1" fill="#ce9178" fill-opacity="0.39"/><rect x="48" y="17" width="1" height="1" fill="#ce9178" fill-opacity="0.36"/><rect x="49" y="17" width="1" height="1" fill="#ce9178" fill-opacity="0.41"/><rect x="50" y="17" width="2" height="1" fill="#ce9178" fill-opacity="0.36"/><rect x="52" y="17" width="2" height="1" fill="#ce9178" fill-opacity="0.39"/><rect x="54" y="17" width="1" height="1" fill="#ce9178" fill-opacity="0.41"/><rect x="55" y="17" width="1" height="1" fill="#ce9178" fill-opacity="0.39"/><rect x="56" y="17" width="1" height="1" fill="#ce9178" fill-opacity="0.36"/><rect x="57" y="17" width="2" height="1" fill="#ce9178" fill-opacity="0.39"/><rect x="59" y="17" width="1" height="1" fill="#ce9178" fill-opacity="0.36"/><rect x="60" y="17" width="1" height="1" fill="#ce9178" fill-opacity="0.39"/><rect x="61" y="17" width="1" height="1" fill="#ce9178" fill-opacity="0.41"/><rect x="62" y="17" width="2" height="1" fill="#ce9178" fill-opacity="0.39"/><rect x="64" y="17" width="1" height="1" fill="#ce9178" fill-opacity="0.14"/><rect x="65" y="17" width="1" height="1" fill="#d4d4d4" fill-opacity="0.19"/><rect x="67" y="17" width="1" height="1" fill="#ce9178" fill-opacity="0.14"/><rect x="68" y="17" width="1" height="1" fill="#ce9178" fill-opacity="0.36"/><rect x="69" y="17" width="2" height="1" fill="#ce9178" fill-opacity="0.39"/><rect x="71" y="17" width="1" height="1" fill="#ce9178" fill-opacity="0.41"/><rect x="72" y="17" width="1" height="1" fill="#ce9178" fill-opacity="0.36"/><rect x="73" y="17" width="1" height="1" fill="#ce9178" fill-opacity="0.39"/><rect x="74" y="17" width="2" height="1" fill="#ce9178" fill-opacity="0.36"/><rect x="76" y="17" width="2" height="1" fill="#ce9178" fill-opacity="0.39"/><rect x="78" y="17" width="1" height="1" fill="#ce9178" fill-opacity="0.41"/><rect x="79" y="17" width="1" height="1" fill="#ce9178" fill-opacity="0.39"/><rect x="80" y="17" width="1" height="1" fill="#ce9178" fill-opacity="0.36"/><rect x="81" y="17" width="2" height="1" fill="#ce9178" fill-opacity="0.39"/><rect x="83" y="17" width="1" height="1" fill="#ce9178" fill-opacity="0.36"/><rect x="84" y="17" width="1" height="1" fill="#ce9178" fill-opacity="0.39"/><rect x="85" y="17" width="1" height="1" fill="#ce9178" fill-opacity="0.41"/><rect x="86" y="17" width="1" height="1" fill="#ce9178" fill-opacity="0.39"/><rect x="87" y="17" width="2" height="1" fill="#ce9178" fill-opacity="0.36"/><rect x="89" y="17" width="1" height="1" fill="#ce9178" fill-opacity="0.14"/><rect x="90" y="17" width="1" height="1" fill="#ffd700" fill-opacity="0.14"/><rect x="91" y="17" width="1" height="1" fill="#d4d4d4" fill-opacity="0.19"/><rect x="0" y="18" width="3" height="1" fill="#9cdcfe" fill-opacity="0.17"/><rect x="3" y="18" width="2" height="1" fill="#9cdcfe" fill-opacity="0.41"/><rect x="6" y="18" width="2" height="1" fill="#dcdcaa" fill-opacity="0.17"/><rect x="8" y="18" width="1" height="1" fill="#dcdcaa" fill-opacity="0.33"/><rect x="9" y="18" width="1" height="1" fill="#dcdcaa" fill-opacity="0.41"/><rect x="10" y="18" width="3" height="1" fill="#dcdcaa" fill-opacity="0.17"/><rect x="13" y="18" width="1" height="1" fill="#ffd700" fill-opacity="0.14"/><rect x="14" y="18" width="1" height="1" fill="#ce9178" fill-opacity="0.14"/><rect x="15" y="18" width="1" height="1" fill="#ce9178" fill-opacity="0.41"/><rect x="16" y="18" width="2" height="1" fill="#ce9178" fill-opacity="0.17"/><rect x="18" y="18" width="1" height="1" fill="#ce9178" fill-opacity="0.19"/><rect x="19" y="18" width="1" height="1" fill="#ce9178" fill-opacity="0.33"/><rect x="20" y="18" width="1" height="1" fill="#ce9178" fill-opacity="0.17"/><rect x="22" y="18" width="1" height="1" fill="#ce9178" fill-opacity="0.41"/><rect x="23" y="18" width="1" height="1" fill="#ce9178" fill-opacity="0.33"/><rect x="24" y="18" width="2" height="1" fill="#ce9178" fill-opacity="0.17"/><rect x="26" y="18" width="1" height="1" fill="#ce9178" fill-opacity="0.19"/><rect x="27" y="18" width="1" height="1" fill="#ce9178" fill-opacity="0.17"/><rect x="29" y="18" width="1" height="1" fill="#ce9178" fill-opacity="0.41"/><rect x="30" y="18" width="2" height="1" fill="#ce9178" fill-opacity="0.17"/><rect x="32" y="18" width="1" height="1" fill="#ce9178" fill-opacity="0.33"/><rect x="33" y="18" width="1" height="1" fill="#ce9178" fill-opacity="0.17"/><rect x="34" y="18" width="1" height="1" fill="#ce9178" fill-opacity="0.19"/><rect x="35" y="18" width="1" height="1" fill="#ce9178" fill-opacity="0.17"/><rect x="36" y="18" width="1" height="1" fill="#ce9178" fill-opacity="0.14"/><rect x="37" y="18" width="1" height="1" fill="#ffd700" fill-opacity="0.14"/><rect x="0" y="19" width="3" height="1" fill="#9cdcfe" fill-opacity="0.39"/><rect x="3" y="19" width="2" height="1" fill="#9cdcfe" fill-opacity="0.36"/><rect x="5" y="19" width="1" height="1" fill="#d4d4d4" fill-opacity="0.19"/><rect x="6" y="19" width="2" height="1" fill="#dcdcaa" fill-opacity="0.39"/><rect x="8" y="19" width="2" height="1" fill="#dcdcaa" fill-opacity="0.36"/><rect x="10" y="19" width="3" height="1" fill="#dcdcaa" fill-opacity="0.39"/><rect x="13" y="19" width="1" height="1" fill="#ffd700" fill-opacity="0.14"/><rect x="14" y="19" width="1" height="1" fill="#ce9178" fill-opacity="0.14"/><rect x="15" y="19" width="1" height="1" fill="#ce9178" fill-opacity="0.36"/><rect x="16" y="19" width="2" height="1" fill="#ce9178" fill-opacity="0.39"/><rect x="18" y="19" width="1" height="1" fill="#ce9178" fill-opacity="0.41"/><rect x="19" y="19" width="1" height="1" fill="#ce9178" fill-opacity="0.36"/><rect x="20" y="19" width="1" height="1" fill="#ce9178" fill-opacity="0.39"/><rect x="22" y="19" width="2" height="1" fill="#ce9178" fill-opacity="0.36"/><rect x="24" y="19" width="2" height="1" fill="#ce9178" fill-opacity="0.39"/><rect x="26" y="19" width="1" height="1" fill="#ce9178" fill-opacity="0.41"/><rect x="27" y="19" width="1" height="1" fill="#ce9178" fill-opacity="0.39"/><rect x="29" y="19" width="1" height="1" fill="#ce9178" fill-opacity="0.36"/><rect x="30" y="19" width="2" height="1" fill="#ce9178" fill-opacity="0.39"/><rect x="32" y="19" width="1" height="1" fill="#ce9178" fill-opacity="0.36"/><rect x="33" y="19" width="1" height="1" fill="#ce9178" fill-opacity="0.39"/><rect x="34" y="19" width="1" height="1" fill="#ce9178" fill-opacity="0.41"/><rect x="35" y="19" width="1" height="1" fill="#ce9178" fill-opacity="0.39"/><rect x="36" y="19" width="1" height="1" fill="#ce9178" fill-opacity="0.14"/><rect x="37" y="19" width="1" height="1" fill="#ffd700" fill-opacity="0.14"/><rect x="38" y="19" width="1" height="1" fill="#d4d4d4" fill-opacity="0.19"/><rect x="0" y="22" width="2" height="1" fill="#6a9955" fill-opacity="0.25"/><rect x="2" y="22" width="1" height="1" fill="#6a9955" fill-opacity="0.41"/><rect x="3" y="22" width="3" height="1" fill="#6a9955" fill-opacity="0.33"/><rect x="6" y="22" width="1" height="1" fill="#6a9955" fill-opacity="0.17"/><rect x="7" y="22" width="1" height="1" fill="#6a9955" fill-opacity="0.19"/><rect x="9" y="22" width="1" height="1" fill="#6a9955" fill-opacity="0.17"/><rect x="10" y="22" width="1" height="1" fill="#6a9955" fill-opacity="0.33"/><rect x="11" y="22" width="1" height="1" fill="#6a9955" fill-opacity="0.17"/><rect x="12" y="22" width="1" height="1" fill="#6a9955" fill-opacity="0.19"/><rect x="13" y="22" width="1" height="1" fill="#6a9955" fill-opacity="0.33"/><rect x="14" y="22" width="1" height="1" fill="#6a9955" fill-opacity="0.17"/><rect x="16" y="22" width="1" height="1" fill="#6a9955" fill-opacity="0.41"/><rect x="17" y="22" width="1" height="1" fill="#6a9955" fill-opacity="0.33"/><rect x="18" y="22" width="2" height="1" fill="#6a9955" fill-opacity="0.17"/><rect x="21" y="22" width="1" height="1" fill="#6a9955" fill-opacity="0.33"/><rect x="22" y="22" width="1" height="1" fill="#6a9955" fill-opacity="0.17"/><rect x="24" y="22" width="1" height="1" fill="#6a9955" fill-opacity="0.41"/><rect x="25" y="22" width="1" height="1" fill="#6a9955" fill-opacity="0.33"/><rect x="26" y="22" width="2" height="1" fill="#6a9955" fill-opacity="0.17"/><rect x="28" y="22" width="1" height="1" fill="#6a9955" fill-opacity="0.19"/><rect x="29" y="22" width="1" height="1" fill="#6a9955" fill-opacity="0.17"/><rect x="31" y="22" width="1" height="1" fill="#6a9955" fill-opacity="0.41"/><rect x="32" y="22" width="2" height="1" fill="#6a9955" fill-opacity="0.17"/><rect x="34" y="22" width="1" height="1" fill="#6a9955" fill-opacity="0.33"/><rect x="35" y="22" width="1" height="1" fill="#6a9955" fill-opacity="0.17"/><rect x="36" y="22" width="1" height="1" fill="#6a9955" fill-opacity="0.19"/><rect x="37" y="22" width="1" height="1" fill="#6a9955" fill-opacity="0.17"/><rect x="0" y="23" width="2" height="1" fill="#6a9955" fill-opacity="0.22"/><rect x="2" y="23" width="4" height="1" fill="#6a9955" fill-opacity="0.36"/><rect x="6" y="23" width="1" height="1" fill="#6a9955" fill-opacity="0.39"/><rect x="7" y="23" width="1" height="1" fill="#6a9955" fill-opacity="0.41"/><rect x="9" y="23" width="1" height="1" fill="#6a9955" fill-opacity="0.39"/><rect x="10" y="23" width="1" height="1" fill="#6a9955" fill-opacity="0.36"/><rect x="11" y="23" width="1" height="1" fill="#6a9955" fill-opacity="0.39"/><rect x="12" y="23" width="1" height="1" fill="#6a9955" fill-opacity="0.41"/><rect x="13" y="23" width="1" height="1" fill="#6a9955" fill-opacity="0.36"/><rect x="14" y="23" width="1" height="1" fill="#6a9955" fill-opacity="0.39"/><rect x="16" y="23" width="2" height="1" fill="#6a9955" fill-opacity="0.36"/><rect x="18" y="23" width="2" height="1" fill="#6a9955" fill-opacity="0.39"/><rect x="21" y="23" width="1" height="1" fill="#6a9955" fill-opacity="0.36"/><rect x="22" y="23" width="1" height="1" fill="#6a9955" fill-opacity="0.39"/><rect x="24" y="23" width="2" height="1" fill="#6a9955" fill-opacity="0.36"/><rect x="26" y="23" width="2" height="1" fill="#6a9955" fill-opacity="0.39"/><rect x="28" y="23" width="1" height="1" fill="#6a9955" fill-opacity="0.41"/><rect x="29" y="23" width="1" height="1" fill="#6a9955" fill-opacity="0.39"/><rect x="31" y="23" width="1" height="1" fill="#6a9955" fill-opacity="0.36"/><rect x="32" y="23" width="2" height="1" fill="#6a9955" fill-opacity="0.39"/><rect x="34" y="23" width="1" height="1" fill="#6a9955" fill-opacity="0.36"/><rect x="35" y="23" width="1" height="1" fill="#6a9955" fill-opacity="0.39"/><rect x="36" y="23" width="1" height="1" fill="#6a9955" fill-opacity="0.41"/><rect x="37" y="23" width="1" height="1" fill="#6a9955" fill-opacity="0.39"/><rect x="0" y="26" width="3" height="1" fill="#569cd6" fill-opacity="0.17"/><rect x="4" y="26" width="2" height="1" fill="#9cdcfe" fill-opacity="0.17"/><rect x="6" y="26" width="1" height="1" fill="#9cdcfe" fill-opacity="0.33"/><rect x="7" y="26" width="1" height="1" fill="#9cdcfe" fill-opacity="0.17"/><rect x="9" y="26" width="1" height="1" fill="#d4d4d4" fill-opacity="0.14"/><rect x="11" y="26" width="4" height="1" fill="#9cdcfe" fill-opacity="0.17"/><rect x="15" y="26" width="1" height="1" fill="#9cdcfe" fill-opacity="0.19"/><rect x="16" y="26" width="2" height="1" fill="#9cdcfe" fill-opacity="0.17"/><rect x="19" y="26" width="1" height="1" fill="#dcdcaa" fill-opacity="0.19"/><rect x="20" y="26" width="1" height="1" fill="#dcdcaa" fill-opacity="0.17"/><rect x="21" y="26" width="1" height="1" fill="#dcdcaa" fill-opacity="0.33"/><rect x="22" y="26" width="1" height="1" fill="#dcdcaa" fill-opacity="0.41"/><rect x="23" y="26" width="1" height="1" fill="#dcdcaa" fill-opacity="0.17"/><rect x="24" y="26" width="1" height="1" fill="#dcdcaa" fill-opacity="0.33"/><rect x="25" y="26" width="1" height="1" fill="#dcdcaa" fill-opacity="0.17"/><rect x="26" y="26" width="1" height="1" fill="#dcdcaa" fill-opacity="0.41"/><rect x="27" y="26" width="3" height="1" fill="#dcdcaa" fill-opacity="0.17"/><rect x="30" y="26" width="3" height="1" fill="#dcdcaa" fill-opacity="0.41"/><rect x="33" y="26" width="1" height="1" fill="#ffd700" fill-opacity="0.14"/><rect x="34" y="26" width="1" height="1" fill="#ce9178" fill-opacity="0.14"/><rect x="35" y="26" width="1" height="1" fill="#ce9178" fill-opacity="0.17"/><rect x="36" y="26" width="1" height="1" fill="#ce9178" fill-opacity="0.33"/><rect x="37" y="26" width="1" height="1" fill="#ce9178" fill-opacity="0.17"/><rect x="38" y="26" width="1" height="1" fill="#ce9178" fill-opacity="0.19"/><rect x="40" y="26" width="2" height="1" fill="#ce9178" fill-opacity="0.25"/><rect x="42" y="26" width="1" height="1" fill="#ce9178" fill-opacity="0.33"/><rect x="43" y="26" width="2" height="1" fill="#ce9178" fill-opacity="0.17"/><rect x="45" y="26" width="1" height="1" fill="#ce9178" fill-opacity="0.33"/><rect x="46" y="26" width="6" height="1" fill="#ce9178" fill-opacity="0.17"/><rect x="52" y="26" width="1" height="1" fill="#ce9178" fill-opacity="0.33"/><rect x="53" y="26" width="1" height="1" fill="#ce9178" fill-opacity="0.17"/><rect x="54" y="26" width="1" height="1" fill="#ce9178" fill-opacity="0.25"/><rect x="55" y="26" width="1" height="1" fill="#ce9178" fill-opacity="0.17"/><rect x="56" y="26" width="3" height="1" fill="#ce9178" fill-opacity="0.33"/><rect x="59" y="26" width="2" height="1" fill="#ce9178" fill-opacity="0.17"/><rect x="61" y="26" width="1" height="1" fill="#ce9178" fill-opacity="0.14"/><rect x="62" y="26" width="1" height="1" fill="#ce9178" fill-opacity="0.41"/><rect x="63" y="26" width="2" height="1" fill="#ce9178" fill-opacity="0.17"/><rect x="65" y="26" width="1" height="1" fill="#ce9178" fill-opacity="0.33"/><rect x="66" y="26" width="4" height="1" fill="#ce9178" fill-opacity="0.17"/><rect x="70" y="26" width="1" height="1" fill="#ce9178" fill-opacity="0.41"/><rect x="71" y="26" width="1" height="1" fill="#ce9178" fill-opacity="0.17"/><rect x="72" y="26" width="1" height="1" fill="#ce9178" fill-opacity="0.33"/><rect x="73" y="26" width="1" height="1" fill="#ce9178" fill-opacity="0.17"/><rect x="74" y="26" width="1" height="1" fill="#ce9178" fill-opacity="0.25"/><rect x="75" y="26" width="3" height="1" fill="#ce9178" fill-opacity="0.17"/><rect x="78" y="26" width="1" height="1" fill="#ce9178" fill-opacity="0.33"/><rect x="79" y="26" width="2" height="1" fill="#ce9178" fill-opacity="0.17"/><rect x="81" y="26" width="3" height="1" fill="#ce9178" fill-opacity="0.33"/><rect x="84" y="26" width="1" height="1" fill="#ce9178" fill-opacity="0.14"/><rect x="85" y="26" width="2" height="1" fill="#ce9178" fill-opacity="0.41"/><rect x="87" y="26" width="1" height="1" fill="#ce9178" fill-opacity="0.25"/><rect x="88" y="26" width="2" height="1" fill="#ce9178" fill-opacity="0.33"/><rect x="90" y="26" width="1" height="1" fill="#ce9178" fill-opacity="0.14"/><rect x="91" y="26" width="1" height="1" fill="#ce9178" fill-opacity="0.41"/><rect x="92" y="26" width="2" height="1" fill="#ce9178" fill-opacity="0.17"/><rect x="94" y="26" width="1" height="1" fill="#ce9178" fill-opacity="0.19"/><rect x="95" y="26" width="1" height="1" fill="#ce9178" fill-opacity="0.33"/><rect x="96" y="26" width="1" height="1" fill="#ce9178" fill-opacity="0.17"/><rect x="97" y="26" width="1" height="1" fill="#ce9178" fill-opacity="0.41"/><rect x="98" y="26" width="2" height="1" fill="#ce9178" fill-opacity="0.17"/><rect x="100" y="26" width="1" height="1" fill="#ce9178" fill-opacity="0.33"/><rect x="101" y="26" width="4" height="1" fill="#ce9178" fill-opacity="0.17"/><rect x="105" y="26" width="1" height="1" fill="#ce9178" fill-opacity="0.41"/><rect x="106" y="26" width="1" height="1" fill="#ce9178" fill-opacity="0.17"/><rect x="107" y="26" width="1" height="1" fill="#ce9178" fill-opacity="0.33"/><rect x="108" y="26" width="1" height="1" fill="#ce9178" fill-opacity="0.17"/><rect x="109" y="26" width="1" height="1" fill="#ce9178" fill-opacity="0.14"/><rect x="110" y="26" width="1" height="1" fill="#ffd700" fill-opacity="0.14"/><rect x="0" y="27" width="3" height="1" fill="#569cd6" fill-opacity="0.39"/><rect x="4" y="27" width="2" height="1" fill="#9cdcfe" fill-opacity="0.39"/><rect x="6" y="27" width="1" height="1" fill="#9cdcfe" fill-opacity="0.36"/><rect x="7" y="27" width="1" height="1" fill="#9cdcfe" fill-opacity="0.39"/><rect x="9" y="27" width="1" height="1" fill="#d4d4d4" fill-opacity="0.14"/><rect x="11" y="27" width="4" height="1" fill="#9cdcfe" fill-opacity="0.39"/><rect x="15" y="27" width="1" height="1" fill="#9cdcfe" fill-opacity="0.41"/><rect x="16" y="27" width="2" height="1" fill="#9cdcfe" fill-opacity="0.39"/><rect x="18" y="27" width="1" height="1" fill="#d4d4d4" fill-opacity="0.19"/><rect x="19" y="27" width="1" height="1" fill="#dcdcaa" fill-opacity="0.41"/><rect x="20" y="27" width="1" height="1" fill="#dcdcaa" fill-opacity="0.39"/><rect x="21" y="27" width="2" height="1" fill="#dcdcaa" fill-opacity="0.36"/><rect x="23" y="27" width="1" height="1" fill="#dcdcaa" fill-opacity="0.39"/><rect x="24" y="27" width="1" height="1" fill="#dcdcaa" fill-opacity="0.36"/><rect x="25" y="27" width="1" height="1" fill="#dcdcaa" fill-opacity="0.39"/><rect x="26" y="27" width="1" height="1" fill="#dcdcaa" fill-opacity="0.36"/><rect x="27" y="27" width="3" height="1" fill="#dcdcaa" fill-opacity="0.39"/><rect x="30" y="27" width="3" height="1" fill="#dcdcaa" fill-opacity="0.36"/><rect x="33" y="27" width="1" height="1" fill="#ffd700" fill-opacity="0.14"/><rect x="34" y="27" width="1" height="1" fill="#ce9178" fill-opacity="0.14"/><rect x="35" y="27" width="1" height="1" fill="#ce9178" fill-opacity="0.39"/><rect x="36" y="27" width="1" height="1" fill="#ce9178" fill-opacity="0.36"/><rect x="37" y="27" width="1" height="1" fill="#ce9178" fill-opacity="0.39"/><rect x="38" y="27" width="1" height="1" fill="#ce9178" fill-opacity="0.41"/><rect x="39" y="27" width="1" height="1" fill="#ce9178" fill-opacity="0.19"/><rect x="40" y="27" width="2" height="1" fill="#ce9178" fill-opacity="0.22"/><rect x="42" y="27" width="1" height="1" fill="#ce9178" fill-opacity="0.36"/><rect x="43" y="27" width="2" height="1" fill="#ce9178" fill-opacity="0.39"/><rect x="45" y="27" width="1" height="1" fill="#ce9178" fill-opacity="0.36"/><rect x="46" y="27" width="6" height="1" fill="#ce9178" fill-opacity="0.39"/><rect x="52" y="27" width="1" height="1" fill="#ce9178" fill-opacity="0.36"/><rect x="53" y="27" width="1" height="1" fill="#ce9178" fill-opacity="0.39"/><rect x="54" y="27" width="1" height="1" fill="#ce9178" fill-opacity="0.22"/><rect x="55" y="27" width="1" height="1" fill="#ce9178" fill-opacity="0.39"/><rect x="56" y="27" width="3" height="1" fill="#ce9178" fill-opacity="0.36"/><rect x="59" y="27" width="2" height="1" fill="#ce9178" fill-opacity="0.39"/><rect x="61" y="27" width="1" height="1" fill="#ce9178" fill-opacity="0.14"/><rect x="62" y="27" width="1" height="1" fill="#ce9178" fill-opacity="0.36"/><rect x="63" y="27" width="2" height="1" fill="#ce9178" fill-opacity="0.39"/><rect x="65" y="27" width="1" height="1" fill="#ce9178" fill-opacity="0.36"/><rect x="66" y="27" width="4" height="1" fill="#ce9178" fill-opacity="0.39"/><rect x="70" y="27" width="1" height="1" fill="#ce9178" fill-opacity="0.36"/><rect x="71" y="27" width="1" height="1" fill="#ce9178" fill-opacity="0.39"/><rect x="72" y="27" width="1" height="1" fill="#ce9178" fill-opacity="0.36"/><rect x="73" y="27" width="1" height="1" fill="#ce9178" fill-opacity="0.39"/><rect x="74" y="27" width="1" height="1" fill="#ce9178" fill-opacity="0.22"/><rect x="75" y="27" width="3" height="1" fill="#ce9178" fill-opacity="0.39"/><rect x="78" y="27" width="1" height="1" fill="#ce9178" fill-opacity="0.36"/><rect x="79" y="27" width="2" height="1" fill="#ce9178" fill-opacity="0.39"/><rect x="81" y="27" width="3" height="1" fill="#ce9178" fill-opacity="0.36"/><rect x="84" y="27" width="1" height="1" fill="#ce9178" fill-opacity="0.14"/><rect x="85" y="27" width="2" height="1" fill="#ce9178" fill-opacity="0.36"/><rect x="87" y="27" width="1" height="1" fill="#ce9178" fill-opacity="0.22"/><rect x="88" y="27" width="2" height="1" fill="#ce9178" fill-opacity="0.36"/><rect x="90" y="27" width="1" height="1" fill="#ce9178" fill-opacity="0.14"/><rect x="91" y="27" width="1" height="1" fill="#ce9178" fill-opacity="0.36"/><rect x="92" y="27" width="2" height="1" fill="#ce9178" fill-opacity="0.39"/><rect x="94" y="27" width="1" height="1" fill="#ce9178" fill-opacity="0.41"/><rect x="95" y="27" width="1" height="1" fill="#ce9178" fill-opacity="0.36"/><rect x="96" y="27" width="1" height="1" fill="#ce9178" fill-opacity="0.39"/><rect x="97" y="27" width="1" height="1" fill="#ce9178" fill-opacity="0.36"/><rect x="98" y="27" width="2" height="1" fill="#ce9178" fill-opacity="0.39"/><rect x="100" y="27" width="1" height="1" fill="#ce9178" fill-opacity="0.36"/><rect x="101" y="27" width="4" height="1" fill="#ce9178" fill-opacity="0.39"/><rect x="105" y="27" width="1" height="1" fill="#ce9178" fill-opacity="0.36"/><rect x="106" y="27" width="1" height="1" fill="#ce9178" fill-opacity="0.39"/><rect x="107" y="27" width="1" height="1" fill="#ce9178" fill-opacity="0.36"/><rect x="108" y="27" width="1" height="1" fill="#ce9178" fill-opacity="0.39"/><rect x="109" y="27" width="1" height="1" fill="#ce9178" fill-opacity="0.14"/><rect x="110" y="27" width="1" height="1" fill="#ffd700" fill-opacity="0.14"/><rect x="0" y="28" width="1" height="1" fill="#9cdcfe" fill-opacity="0.17"/><rect x="1" y="28" width="1" height="1" fill="#9cdcfe" fill-opacity="0.19"/><rect x="2" y="28" width="2" height="1" fill="#9cdcfe" fill-opacity="0.41"/><rect x="5" y="28" width="1" height="1" fill="#d4d4d4" fill-opacity="0.14"/><rect x="7" y="28" width="1" height="1" fill="#9cdcfe" fill-opacity="0.17"/><rect x="8" y="28" width="1" height="1" fill="#9cdcfe" fill-opacity="0.19"/><rect x="9" y="28" width="1" height="1" fill="#9cdcfe" fill-opacity="0.41"/><rect x="10" y="28" width="3" height="1" fill="#9cdcfe" fill-opacity="0.17"/><rect x="14" y="28" width="1" height="1" fill="#dcdcaa" fill-opacity="0.19"/><rect x="15" y="28" width="1" height="1" fill="#dcdcaa" fill-opacity="0.17"/><rect x="16" y="28" width="1" height="1" fill="#dcdcaa" fill-opacity="0.33"/><rect x="17" y="28" width="1" height="1" fill="#dcdcaa" fill-opacity="0.41"/><rect x="18" y="28" width="1" height="1" fill="#dcdcaa" fill-opacity="0.33"/><rect x="19" y="28" width="2" height="1" fill="#dcdcaa" fill-opacity="0.17"/><rect x="21" y="28" width="1" height="1" fill="#dcdcaa" fill-opacity="0.19"/><rect x="22" y="28" width="1" height="1" fill="#dcdcaa" fill-opacity="0.17"/><rect x="23" y="28" width="1" height="1" fill="#dcdcaa" fill-opacity="0.41"/><rect x="24" y="28" width="2" height="1" fill="#dcdcaa" fill-opacity="0.17"/><rect x="26" y="28" width="1" height="1" fill="#dcdcaa" fill-opacity="0.33"/><rect x="27" y="28" width="1" height="1" fill="#dcdcaa" fill-opacity="0.17"/><rect x="28" y="28" width="1" height="1" fill="#dcdcaa" fill-opacity="0.19"/><rect x="29" y="28" width="1" height="1" fill="#dcdcaa" fill-opacity="0.17"/><rect x="30" y="28" width="1" height="1" fill="#dcdcaa" fill-opacity="0.41"/><rect x="31" y="28" width="1" height="1" fill="#dcdcaa" fill-opacity="0.19"/><rect x="32" y="28" width="2" height="1" fill="#dcdcaa" fill-opacity="0.41"/><rect x="34" y="28" width="1" height="1" fill="#ffd700" fill-opacity="0.14"/><rect x="35" y="28" width="1" height="1" fill="#ce9178" fill-opacity="0.14"/><rect x="36" y="28" width="1" height="1" fill="#ce9178" fill-opacity="0.41"/><rect x="37" y="28" width="2" height="1" fill="#ce9178" fill-opacity="0.17"/><rect x="39" y="28" width="1" height="1" fill="#ce9178" fill-opacity="0.19"/><rect x="40" y="28" width="1" height="1" fill="#ce9178" fill-opacity="0.33"/><rect x="41" y="28" width="1" height="1" fill="#ce9178" fill-opacity="0.17"/><rect x="42" y="28" width="1" height="1" fill="#ce9178" fill-opacity="0.41"/><rect x="43" y="28" width="1" height="1" fill="#ce9178" fill-opacity="0.33"/><rect x="44" y="28" width="2" height="1" fill="#ce9178" fill-opacity="0.17"/><rect x="46" y="28" width="1" height="1" fill="#ce9178" fill-opacity="0.19"/><rect x="47" y="28" width="1" height="1" fill="#ce9178" fill-opacity="0.17"/><rect x="48" y="28" width="1" height="1" fill="#ce9178" fill-opacity="0.41"/><rect x="49" y="28" width="2" height="1" fill="#ce9178" fill-opacity="0.17"/><rect x="51" y="28" width="1" height="1" fill="#ce9178" fill-opacity="0.33"/><rect x="52" y="28" width="1" height="1" fill="#ce9178" fill-opacity="0.17"/><rect x="53" y="28" width="1" height="1" fill="#ce9178" fill-opacity="0.19"/><rect x="54" y="28" width="1" height="1" fill="#ce9178" fill-opacity="0.17"/><rect x="55" y="28" width="2" height="1" fill="#ce9178" fill-opacity="0.41"/><rect x="57" y="28" width="1" height="1" fill="#ce9178" fill-opacity="0.14"/><rect x="58" y="28" width="1" height="1" fill="#ffd700" fill-opacity="0.14"/><rect x="0" y="29" width="1" height="1" fill="#9cdcfe" fill-opacity="0.39"/><rect x="1" y="29" width="1" height="1" fill="#9cdcfe" fill-opacity="0.41"/><rect x="2" y="29" width="2" height="1" fill="#9cdcfe" fill-opacity="0.36"/><rect x="5" y="29" width="1" height="1" fill="#d4d4d4" fill-opacity="0.14"/><rect x="7" y="29" width="1" height="1" fill="#9cdcfe" fill-opacity="0.39"/><rect x="8" y="29" width="1" height="1" fill="#9cdcfe" fill-opacity="0.41"/><rect x="9" y="29" width="1" height="1" fill="#9cdcfe" fill-opacity="0.36"/><rect x="10" y="29" width="3" height="1" fill="#9cdcfe" fill-opacity="0.39"/><rect x="13" y="29" width="1" height="1" fill="#d4d4d4" fill-opacity="0.19"/><rect x="14" y="29" width="1" height="1" fill="#dcdcaa" fill-opacity="0.41"/><rect x="15" y="29" width="1" height="1" fill="#dcdcaa" fill-opacity="0.39"/><rect x="16" y="29" width="3" height="1" fill="#dcdcaa" fill-opacity="0.36"/><rect x="19" y="29" width="2" height="1" fill="#dcdcaa" fill-opacity="0.39"/><rect x="21" y="29" width="1" height="1" fill="#dcdcaa" fill-opacity="0.41"/><rect x="22" y="29" width="1" height="1" fill="#dcdcaa" fill-opacity="0.39"/><rect x="23" y="29" width="1" height="1" fill="#dcdcaa" fill-opacity="0.36"/><rect x="24" y="29" width="2" height="1" fill="#dcdcaa" fill-opacity="0.39"/><rect x="26" y="29" width="1" height="1" fill="#dcdcaa" fill-opacity="0.36"/><rect x="27" y="29" width="1" height="1" fill="#dcdcaa" fill-opacity="0.39"/><rect x="28" y="29" width="1" height="1" fill="#dcdcaa" fill-opacity="0.41"/><rect x="29" y="29" width="1" height="1" fill="#dcdcaa" fill-opacity="0.39"/><rect x="30" y="29" width="1" height="1" fill="#dcdcaa" fill-opacity="0.36"/><rect x="31" y="29" width="1" height="1" fill="#dcdcaa" fill-opacity="0.41"/><rect x="32" y="29" width="2" height="1" fill="#dcdcaa" fill-opacity="0.36"/><rect x="34" y="29" width="1" height="1" fill="#ffd700" fill-opacity="0.14"/><rect x="35" y="29" width="1" height="1" fill="#ce9178" fill-opacity="0.14"/><rect x="36" y="29" width="1" height="1" fill="#ce9178" fill-opacity="0.36"/><rect x="37" y="29" width="2" height="1" fill="#ce9178" fill-opacity="0.39"/><rect x="39" y="29" width="1" height="1" fill="#ce9178" fill-opacity="0.41"/><rect x="40" y="29" width="1" height="1" fill="#ce9178" fill-opacity="0.36"/><rect x="41" y="29" width="1" height="1" fill="#ce9178" fill-opacity="0.39"/><rect x="42" y="29" width="2" height="1" fill="#ce9178" fill-opacity="0.36"/><rect x="44" y="29" width="2" height="1" fill="#ce9178" fill-opacity="0.39"/><rect x="46" y="29" width="1" height="1" fill="#ce9178" fill-opacity="0.41"/><rect x="47" y="29" width="1" height="1" fill="#ce9178" fill-opacity="0.39"/><rect x="48" y="29" width="1" height="1" fill="#ce9178" fill-opacity="0.36"/><rect x="49" y="29" width="2" height="1" fill="#ce9178" fill-opacity="0.39"/><rect x="51" y="29" width="1" height="1" fill="#ce9178" fill-opacity="0.36"/><rect x="52" y="29" width="1" height="1" fill="#ce9178" fill-opacity="0.39"/><rect x="53" y="29" width="1" height="1" fill="#ce9178" fill-opacity="0.41"/><rect x="54" y="29" width="1" height="1" fill="#ce9178" fill-opacity="0.39"/><rect x="55" y="29" width="2" height="1" fill="#ce9178" fill-opacity="0.36"/><rect x="57" y="29" width="1" height="1" fill="#ce9178" fill-opacity="0.14"/><rect x="58" y="29" width="1" height="1" fill="#ffd700" fill-opacity="0.14"/><rect x="0" y="30" width="1" height="1" fill="#9cdcfe" fill-opacity="0.17"/><rect x="1" y="30" width="1" height="1" fill="#9cdcfe" fill-opacity="0.19"/><rect x="2" y="30" width="2" height="1" fill="#9cdcfe" fill-opacity="0.41"/><rect x="5" y="30" width="1" height="1" fill="#dcdcaa" fill-opacity="0.17"/><rect x="6" y="30" width="2" height="1" fill="#dcdcaa" fill-opacity="0.33"/><rect x="8" y="30" width="1" height="1" fill="#dcdcaa" fill-opacity="0.41"/><rect x="9" y="30" width="1" height="1" fill="#dcdcaa" fill-opacity="0.33"/><rect x="10" y="30" width="2" height="1" fill="#dcdcaa" fill-opacity="0.17"/><rect x="12" y="30" width="1" height="1" fill="#ffd700" fill-opacity="0.14"/><rect x="13" y="30" width="2" height="1" fill="#9cdcfe" fill-opacity="0.17"/><rect x="15" y="30" width="1" height="1" fill="#9cdcfe" fill-opacity="0.33"/><rect x="16" y="30" width="1" height="1" fill="#9cdcfe" fill-opacity="0.17"/><rect x="17" y="30" width="1" height="1" fill="#ffd700" fill-opacity="0.14"/><rect x="0" y="31" width="1" height="1" fill="#9cdcfe" fill-opacity="0.39"/><rect x="1" y="31" width="1" height="1" fill="#9cdcfe" fill-opacity="0.41"/><rect x="2" y="31" width="2" height="1" fill="#9cdcfe" fill-opacity="0.36"/><rect x="4" y="31" width="1" height="1" fill="#d4d4d4" fill-opacity="0.19"/><rect x="5" y="31" width="1" height="1" fill="#dcdcaa" fill-opacity="0.39"/><rect x="6" y="31" width="4" height="1" fill="#dcdcaa" fill-opacity="0.36"/><rect x="10" y="31" width="2" height="1" fill="#dcdcaa" fill-opacity="0.39"/><rect x="12" y="31" width="1" height="1" fill="#ffd700" fill-opacity="0.14"/><rect x="13" y="31" width="2" height="1" fill="#9cdcfe" fill-opacity="0.39"/><rect x="15" y="31" width="1" height="1" fill="#9cdcfe" fill-opacity="0.36"/><rect x="16" y="31" width="1" height="1" fill="#9cdcfe" fill-opacity="0.39"/><rect x="17" y="31" width="1" height="1" fill="#ffd700" fill-opacity="0.14"/><rect x="0" y="34" width="2" height="1" fill="#6a9955" fill-opacity="0.25"/><rect x="2" y="34" width="1" height="1" fill="#6a9955" fill-opacity="0.41"/><rect x="3" y="34" width="3" height="1" fill="#6a9955" fill-opacity="0.33"/><rect x="6" y="34" width="1" height="1" fill="#6a9955" fill-opacity="0.17"/><rect x="7" y="34" width="1" height="1" fill="#6a9955" fill-opacity="0.19"/><rect x="9" y="34" width="1" height="1" fill="#6a9955" fill-opacity="0.41"/><rect x="10" y="34" width="1" height="1" fill="#6a9955" fill-opacity="0.33"/><rect x="11" y="34" width="2" height="1" fill="#6a9955" fill-opacity="0.17"/><rect x="14" y="34" width="1" height="1" fill="#6a9955" fill-opacity="0.17"/><rect x="15" y="34" width="3" height="1" fill="#6a9955" fill-opacity="0.33"/><rect x="19" y="34" width="2" height="1" fill="#6a9955" fill-opacity="0.33"/><rect x="21" y="34" width="1" height="1" fill="#6a9955" fill-opacity="0.17"/><rect x="23" y="34" width="1" height="1" fill="#6a9955" fill-opacity="0.17"/><rect x="24" y="34" width="4" height="1" fill="#6a9955" fill-opacity="0.33"/><rect x="28" y="34" width="3" height="1" fill="#6a9955" fill-opacity="0.17"/><rect x="33" y="34" width="1" height="1" fill="#6a9955" fill-opacity="0.17"/><rect x="35" y="34" width="1" height="1" fill="#6a9955" fill-opacity="0.19"/><rect x="38" y="34" width="1" height="1" fill="#6a9955" fill-opacity="0.41"/><rect x="39" y="34" width="2" height="1" fill="#6a9955" fill-opacity="0.33"/><rect x="41" y="34" width="1" height="1" fill="#6a9955" fill-opacity="0.17"/><rect x="42" y="34" width="2" height="1" fill="#6a9955" fill-opacity="0.33"/><rect x="44" y="34" width="1" height="1" fill="#6a9955" fill-opacity="0.17"/><rect x="45" y="34" width="1" height="1" fill="#6a9955" fill-opacity="0.33"/><rect x="46" y="34" width="1" height="1" fill="#6a9955" fill-opacity="0.17"/><rect x="48" y="34" width="1" height="1" fill="#6a9955" fill-opacity="0.41"/><rect x="49" y="34" width="3" height="1" fill="#6a9955" fill-opacity="0.17"/><rect x="52" y="34" width="1" height="1" fill="#6a9955" fill-opacity="0.19"/><rect x="0" y="35" width="2" height="1" fill="#6a9955" fill-opacity="0.22"/><rect x="2" y="35" width="4" height="1" fill="#6a9955" fill-opacity="0.36"/><rect x="6" y="35" width="1" height="1" fill="#6a9955" fill-opacity="0.39"/><rect x="7" y="35" width="1" height="1" fill="#6a9955" fill-opacity="0.41"/><rect x="9" y="35" width="2" height="1" fill="#6a9955" fill-opacity="0.36"/><rect x="11" y="35" width="2" height="1" fill="#6a9955" fill-opacity="0.39"/><rect x="14" y="35" width="1" height="1" fill="#6a9955" fill-opacity="0.39"/><rect x="15" y="35" width="3" height="1" fill="#6a9955" fill-opacity="0.36"/><rect x="19" y="35" width="2" height="1" fill="#6a9955" fill-opacity="0.36"/><rect x="21" y="35" width="1" height="1" fill="#6a9955" fill-opacity="0.39"/><rect x="23" y="35" width="1" height="1" fill="#6a9955" fill-opacity="0.39"/><rect x="24" y="35" width="4" height="1" fill="#6a9955" fill-opacity="0.36"/><rect x="28" y="35" width="3" height="1" fill="#6a9955" fill-opacity="0.39"/><rect x="31" y="35" width="1" height="1" fill="#6a9955" fill-opacity="0.19"/><rect x="33" y="35" width="1" height="1" fill="#6a9955" fill-opacity="0.39"/><rect x="34" y="35" width="1" height="1" fill="#6a9955" fill-opacity="0.19"/><rect x="35" y="35" width="1" height="1" fill="#6a9955" fill-opacity="0.41"/><rect x="36" y="35" width="1" height="1" fill="#6a9955" fill-opacity="0.19"/><rect x="38" y="35" width="3" height="1" fill="#6a9955" fill-opacity="0.36"/><rect x="41" y="35" width="1" height="1" fill="#6a9955" fill-opacity="0.39"/><rect x="42" y="35" width="2" height="1" fill="#6a9955" fill-opacity="0.36"/><rect x="44" y="35" width="1" height="1" fill="#6a9955" fill-opacity="0.39"/><rect x="45" y="35" width="1" height="1" fill="#6a9955" fill-opacity="0.36"/><rect x="46" y="35" width="1" height="1" fill="#6a9955" fill-opacity="0.39"/><rect x="48" y="35" width="1" height="1" fill="#6a9955" fill-opacity="0.36"/><rect x="49" y="35" width="3" height="1" fill="#6a9955" fill-opacity="0.39"/><rect x="52" y="35" width="1" height="1" fill="#6a9955" fill-opacity="0.41"/><rect x="0" y="38" width="1" height="1" fill="#9cdcfe" fill-opacity="0.17"/><rect x="1" y="38" width="1" height="1" fill="#9cdcfe" fill-opacity="0.19"/><rect x="2" y="38" width="2" height="1" fill="#9cdcfe" fill-opacity="0.41"/><rect x="5" y="38" width="1" height="1" fill="#dcdcaa" fill-opacity="0.17"/><rect x="6" y="38" width="2" height="1" fill="#dcdcaa" fill-opacity="0.33"/><rect x="8" y="38" width="1" height="1" fill="#dcdcaa" fill-opacity="0.41"/><rect x="9" y="38" width="1" height="1" fill="#dcdcaa" fill-opacity="0.33"/><rect x="10" y="38" width="5" height="1" fill="#dcdcaa" fill-opacity="0.17"/><rect x="15" y="38" width="1" height="1" fill="#dcdcaa" fill-opacity="0.33"/><rect x="16" y="38" width="1" height="1" fill="#dcdcaa" fill-opacity="0.19"/><rect x="17" y="38" width="1" height="1" fill="#ffd700" fill-opacity="0.14"/><rect x="18" y="38" width="1" height="1" fill="#9cdcfe" fill-opacity="0.17"/><rect x="19" y="38" width="2" height="1" fill="#9cdcfe" fill-opacity="0.33"/><rect x="21" y="38" width="1" height="1" fill="#9cdcfe" fill-opacity="0.41"/><rect x="22" y="38" width="3" height="1" fill="#9cdcfe" fill-opacity="0.17"/><rect x="25" y="38" width="1" height="1" fill="#9cdcfe" fill-opacity="0.19"/><rect x="26" y="38" width="1" height="1" fill="#ffd700" fill-opacity="0.14"/><rect x="0" y="39" width="1" height="1" fill="#9cdcfe" fill-opacity="0.39"/><rect x="1" y="39" width="1" height="1" fill="#9cdcfe" fill-opacity="0.41"/><rect x="2" y="39" width="2" height="1" fill="#9cdcfe" fill-opacity="0.36"/><rect x="4" y="39" width="1" height="1" fill="#d4d4d4" fill-opacity="0.19"/><rect x="5" y="39" width="1" height="1" fill="#dcdcaa" fill-opacity="0.39"/><rect x="6" y="39" width="4" height="1" fill="#dcdcaa" fill-opacity="0.36"/><rect x="10" y="39" width="5" height="1" fill="#dcdcaa" fill-opacity="0.39"/><rect x="15" y="39" width="1" height="1" fill="#dcdcaa" fill-opacity="0.36"/><rect x="16" y="39" width="1" height="1" fill="#dcdcaa" fill-opacity="0.41"/><rect x="17" y="39" width="1" height="1" fill="#ffd700" fill-opacity="0.14"/><rect x="18" y="39" width="1" height="1" fill="#9cdcfe" fill-opacity="0.39"/><rect x="19" y="39" width="3" height="1" fill="#9cdcfe" fill-opacity="0.36"/><rect x="22" y="39" width="3" height="1" fill="#9cdcfe" fill-opacity="0.39"/><rect x="25" y="39" width="1" height="1" fill="#9cdcfe" fill-opacity="0.41"/><rect x="26" y="39" width="1" height="1" fill="#ffd700" fill-opacity="0.14"/></svg>
<div class="t" id="m_file" style="left:47.00px;top:10.70px;font-size:13px;line-height:13px;color:#cccccc;transform:scaleX(0.9500);-webkit-text-stroke:0.25px #cccccc">File</div>
<div class="t" id="m_edit" style="left:81.40px;top:10.70px;font-size:13px;line-height:13px;color:#cccccc;transform:scaleX(1.0143);-webkit-text-stroke:0.25px #cccccc">Edit</div>
<div class="t" id="m_sel" style="left:119.40px;top:10.70px;font-size:13px;line-height:13px;color:#cccccc;transform:scaleX(0.9769);-webkit-text-stroke:0.25px #cccccc">Selection</div>
<div class="t" id="m_view" style="left:187.60px;top:10.70px;font-size:13px;line-height:13px;color:#cccccc;transform:scaleX(0.9714);-webkit-text-stroke:0.25px #cccccc">View</div>
<div class="t" id="search" style="left:530.00px;top:11.10px;font-size:13px;line-height:13px;color:#cccccc;transform:scaleX(0.8750);-webkit-text-stroke:0.2px #cccccc">Search</div>
<div class="t" id="tab" style="left:83.00px;top:46.70px;font-size:13px;line-height:13px;color:#ffffff;transform:scaleX(0.9324);">SD_BA_CreateCP6559595039518683883.js</div>
<div class="t" id="b_c" style="left:67.00px;top:75.30px;font-size:13px;line-height:13px;color:#bababa;transform:scaleX(0.9364);">C:</div>
<div class="t" id="b_users" style="left:94.80px;top:75.30px;font-size:13px;line-height:13px;color:#bababa;transform:scaleX(0.9030);">Users</div>
<div class="t" id="b_app" style="left:180.80px;top:75.30px;font-size:13px;line-height:13px;color:#bababa;transform:scaleX(0.9706);">AppData</div>
<div class="t" id="b_local" style="left:247.00px;top:75.30px;font-size:13px;line-height:13px;color:#bababa;transform:scaleX(0.9300);">Local</div>
<div class="t" id="b_temp" style="left:293.60px;top:75.30px;font-size:13px;line-height:13px;color:#bababa;transform:scaleX(0.9281);">Temp</div>
<div class="t" id="b_folder" style="left:340.00px;top:75.30px;font-size:13px;line-height:13px;color:#bababa;transform:scaleX(0.9564);">JSEditFolder10077711967158688495</div>
<div class="t" id="b_file" style="left:587.40px;top:75.30px;font-size:13px;line-height:13px;color:#bababa;transform:scaleX(0.9328);">SD_BA_CreateCP6559595039518683883.js</div>
<div class="t" style="left:66.0px;top:47.0px;font-size:11.5px;line-height:11.5px;font-weight:bold;color:#cbcb41;-webkit-text-stroke:0.3px #cbcb41;transform:scaleX(0.820)">JS</div>
<div class="t" style="left:569.6px;top:76.2px;font-size:11.5px;line-height:11.5px;font-weight:bold;color:#cbcb41;-webkit-text-stroke:0.3px #cbcb41;transform:scaleX(0.820)">JS</div>
<svg class="abs" style="left:0;top:0" width="1006" height="479"><rect x="0" y="0" width="1006" height="1" fill="#000"/><rect x="1005" y="0" width="1" height="479" fill="#000"/><rect x="0" y="478" width="1006" height="1" fill="#000"/><rect x="0" y="0" width="1" height="479" fill="#000"/></svg>
</body></html>
